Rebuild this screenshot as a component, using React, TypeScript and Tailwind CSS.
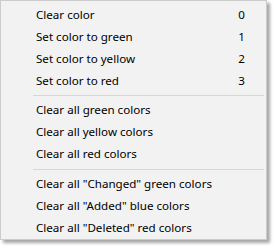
import React from "react";

type Item = { label: string; key?: string } | { sep: number };

const items: Item[] = [
  { label: "Clear color", key: "0" },
  { label: "Set color to green", key: "1" },
  { label: "Set color to yellow", key: "2" },
  { label: "Set color to red", key: "3" },
  { sep: 7 },
  { label: "Clear all green colors" },
  { label: "Clear all yellow colors" },
  { label: "Clear all red colors" },
  { sep: 8 },
  { label: 'Clear all "Changed" green colors' },
  { label: 'Clear all "Added" blue colors' },
  { label: 'Clear all "Deleted" red colors' },
];

export default function App() {
  return (
    <div className="w-[275px] h-[248px] bg-white">
      <div
        className="w-[267px] h-[240px] bg-[#f2f2f2] border border-[#cccccc] shadow-[3px_3px_3px_rgba(0,0,0,0.35)] pt-[3px] flex flex-col text-[11.6px] text-black"
        style={{ fontFamily: '"Segoe UI", "Noto Sans", sans-serif' }}
      >
        {items.map((it, i) =>
          "sep" in it ? (
            <div
              key={i}
              className={`${it.sep === 7 ? "h-[7px]" : "h-[8px]"} flex items-center pl-[32px] pr-[2px]`}
            >
              <div className="h-px w-full bg-[#d7d7d7]" />
            </div>
          ) : (
            <div key={i} className="h-[22px] shrink-0 flex items-center pl-[35px] pr-[21px] leading-none">
              <span className="flex-1 whitespace-nowrap">{it.label}</span>
              {it.key && <span>{it.key}</span>}
            </div>
          )
        )}
      </div>
    </div>
  );
}
